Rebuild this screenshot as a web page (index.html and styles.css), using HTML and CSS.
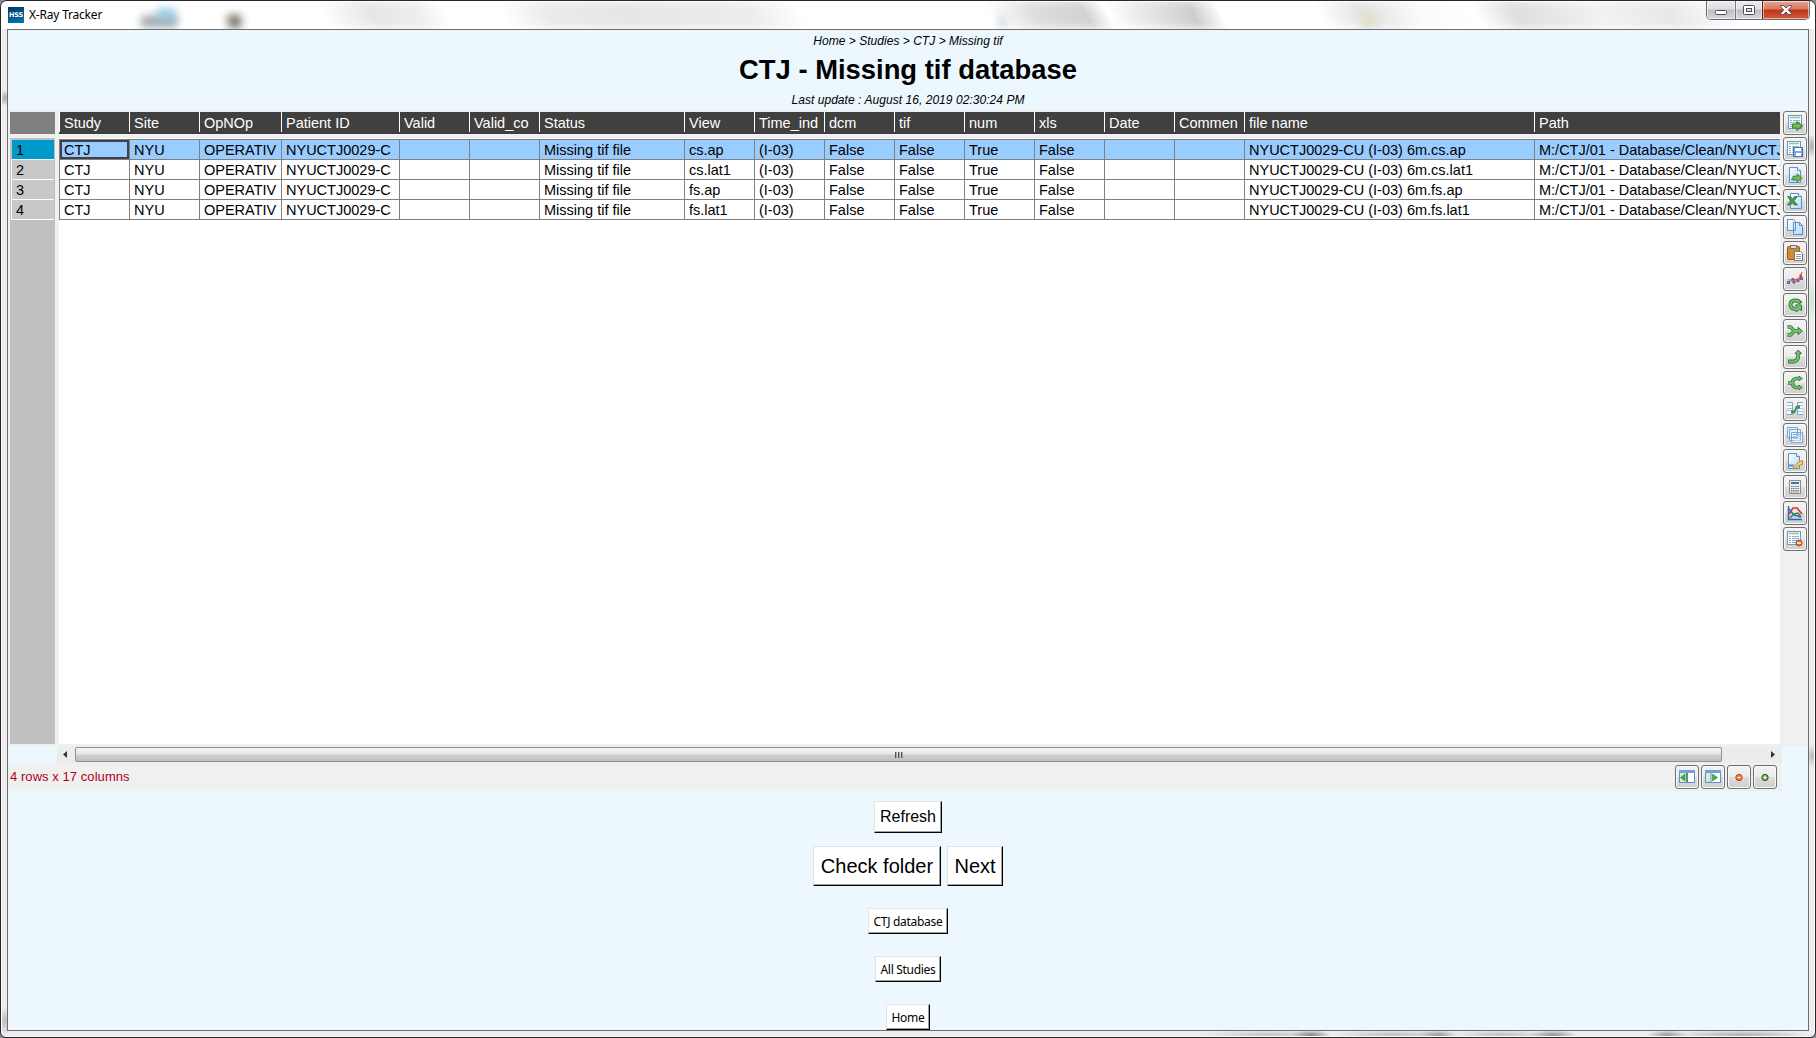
FILE: index.html
```html
<!DOCTYPE html>
<html lang="en">
<head>
<meta charset="utf-8">
<title>X-Ray Tracker</title>
<link rel="stylesheet" href="styles.css">
</head>
<body>
<svg class="sprite" aria-hidden="true">
  <defs>
    <linearGradient id="page" x2="1" y2="1"><stop stop-color="#fff"/><stop offset="1" stop-color="#b7d7f3"/></linearGradient>
    <symbol id="sheet" viewBox="0 0 16 16"><rect x=".5" y=".5" width="13" height="13" fill="#f5faff" stroke="#6b98cb"/><path d="M2 2.500h10" stroke="#96c982" stroke-width="1.500"/><path d="M2 5.500h10M2 7.500h10M2 9.500h10M2 11.500h10" stroke="#8fb4de"/><path d="M4.500 4v9" stroke="#fff"/></symbol>
    <symbol id="doc" viewBox="0 0 16 16"><path d="M2.500 .5h8l3 3v12h-11z" fill="url(#page)" stroke="#5b8fd0"/><path d="M10.500 .5v3h3" fill="#fff" stroke="#5b8fd0"/></symbol>
    <symbol id="arrow" viewBox="0 0 10 9"><path d="M.5 2.700h4V.6l5 3.900-5 3.900V6.300h-4z" fill="#79b957" stroke="#37872d"/></symbol>
  </defs>
</svg>
<div class="window">
  <header class="titlebar">
    <span class="app-icon">HSS</span>
    <span class="app-name">X-Ray Tracker</span>
    <i class="ghost g1"></i><i class="ghost g2"></i><i class="ghost g3"></i><i class="ghost g4"></i><i class="ghost g5"></i>
    <div class="controls">
      <span class="ctl min"><svg width="12" height="6"><rect x=".5" y=".5" width="11" height="4" rx="1" fill="#fff" stroke="#4c4c5c"/></svg></span>
      <span class="ctl max"><svg width="12" height="10"><rect x=".5" y=".5" width="11" height="9" rx="1" fill="#fff" stroke="#4c4c5c"/><rect x="3.500" y="3.500" width="5" height="3" fill="#ddd" stroke="#4c4c5c"/></svg></span>
      <span class="ctl close"><svg width="12" height="10"><path d="M.6.6h3.200L6 3 8.200.6h3.200v1.200L8.300 5l3.100 3.200v1.200H8.200L6 7 3.800 9.400H.6V8.200L3.700 5 .6 1.800z" fill="#fff" stroke="#574a55"/></svg></span>
    </div>
  </header>
  <main class="client">
    <section class="heading">
      <p class="crumbs">Home &gt; Studies &gt; CTJ &gt; Missing tif</p>
      <h1>CTJ - Missing tif database</h1>
      <p class="updated">Last update : August 16, 2019 02:30:24 PM</p>
    </section>
    <section class="sheet">
      <div class="rownums">
        <div class="corner"></div>
        <ol><li class="on">1</li><li>2</li><li>3</li><li>4</li></ol>
      </div>
      <div class="grid">
        <table>
          <colgroup><col class="w70"><col class="w70"><col class="w82"><col class="w118"><col class="w70"><col class="w70"><col class="w145"><col class="w70"><col class="w70"><col class="w70"><col class="w70"><col class="w70"><col class="w70"><col class="w70"><col class="w70"><col class="w290"><col class="w290"></colgroup>
          <thead><tr><th>Study</th><th>Site</th><th>OpNOp</th><th>Patient ID</th><th>Valid</th><th>Valid_co</th><th>Status</th><th>View</th><th>Time_ind</th><th>dcm</th><th>tif</th><th>num</th><th>xls</th><th>Date</th><th>Commen</th><th>file name</th><th>Path</th></tr></thead>
          <tbody>
            <tr class="gap"><td colspan="17"></td></tr>
            <tr class="on"><td class="cursor">CTJ</td><td>NYU</td><td>OPERATIV</td><td>NYUCTJ0029-C</td><td></td><td></td><td>Missing tif file</td><td>cs.ap</td><td>(I-03)</td><td>False</td><td>False</td><td>True</td><td>False</td><td></td><td></td><td>NYUCTJ0029-CU (I-03) 6m.cs.ap</td><td>M:/CTJ/01 - Database/Clean/NYUCTJ</td></tr>
            <tr><td>CTJ</td><td>NYU</td><td>OPERATIV</td><td>NYUCTJ0029-C</td><td></td><td></td><td>Missing tif file</td><td>cs.lat1</td><td>(I-03)</td><td>False</td><td>False</td><td>True</td><td>False</td><td></td><td></td><td>NYUCTJ0029-CU (I-03) 6m.cs.lat1</td><td>M:/CTJ/01 - Database/Clean/NYUCTJ</td></tr>
            <tr><td>CTJ</td><td>NYU</td><td>OPERATIV</td><td>NYUCTJ0029-C</td><td></td><td></td><td>Missing tif file</td><td>fs.ap</td><td>(I-03)</td><td>False</td><td>False</td><td>True</td><td>False</td><td></td><td></td><td>NYUCTJ0029-CU (I-03) 6m.fs.ap</td><td>M:/CTJ/01 - Database/Clean/NYUCTJ</td></tr>
            <tr><td>CTJ</td><td>NYU</td><td>OPERATIV</td><td>NYUCTJ0029-C</td><td></td><td></td><td>Missing tif file</td><td>fs.lat1</td><td>(I-03)</td><td>False</td><td>False</td><td>True</td><td>False</td><td></td><td></td><td>NYUCTJ0029-CU (I-03) 6m.fs.lat1</td><td>M:/CTJ/01 - Database/Clean/NYUCTJ</td></tr>
          </tbody>
        </table>
      </div>
      <nav class="tools">
        <span class="tool"><svg viewBox="0 0 16 16"><use href="#sheet" x="1" y="0" width="16" height="16"/><use href="#arrow" x="5" y="6" width="11" height="10"/></svg></span>
        <span class="tool"><svg viewBox="0 0 16 16"><use href="#sheet" width="16" height="16"/><rect x="6.500" y="6.500" width="9" height="9" fill="#7da7e0" stroke="#4473b8"/><path d="M8 7h6v3H8zM9 12h5v3H9z" fill="#fff"/></svg></span>
        <span class="tool"><svg viewBox="0 0 16 16"><use href="#doc" width="16" height="16"/><path d="M4 12.500h4" stroke="#5b8fd0" stroke-width="2"/><use href="#arrow" x="5" y="6.500" width="11" height="9"/></svg></span>
        <span class="tool"><svg viewBox="0 0 16 16"><use href="#doc" x="1" width="16" height="16"/><path d="M.5 3.500h3L5.500 6l2-2.500h3L7 7.700l3.500 4.300H7L5.300 9.700 3.600 12H.3l3.300-4.300z" fill="#4c9b50" stroke="#23713c" stroke-width=".7"/></svg></span>
        <span class="tool"><svg viewBox="0 0 16 16"><path d="M.5.5h6l2 2v9h-8zM6.500 3.500h6l3 3v9h-9z" fill="url(#page)" stroke="#5b8fd0"/><path d="M12.500 3.500v3h3" fill="none" stroke="#5b8fd0"/></svg></span>
        <span class="tool"><svg viewBox="0 0 16 16"><rect x=".5" y="1.500" width="12" height="13" rx="1" fill="#d48a31" stroke="#9a5a17"/><rect x="3.500" y=".5" width="6" height="3" fill="#ddd" stroke="#777"/><path d="M7.500 6.500h6l2 2v7h-8z" fill="#fff" stroke="#777"/><path d="M9 9.500h5M9 11.500h5M9 13.500h5" stroke="#999"/></svg></span>
        <span class="tool"><svg viewBox="0 0 16 16" fill="none"><path d="M1.500 11.500L5.500 8l6 1.500L15 1" stroke="#e63b35"/><path d="M1.500 8.500L6.500 10.500l4-3.500 4 1" stroke="#5f8fd2"/><g fill="#e63b35"><path d="M4.500 7h2.500v2.500H4.500zM9.500 8h3v3h-3zM12.500 3.500h2.500v2.500h-2.500z"/></g><g fill="#8fb8e8" stroke="#2e62ad"><path d="M.5 10.500h2v2h-2zM6 10h2v2H6zM13.500 6.500h2v2h-2z"/></g></svg></span>
        <span class="tool"><svg viewBox="0 0 16 16" fill="none"><path d="M13.500 6.500C12 2.500 3.500 2 3.500 7.500c0 3.500 2.500 4.500 5 4.500" stroke="#2f7d3b" stroke-width="4"/><path d="M8.500 7.800l6 .2v5.500l-2-1.200-3 2.700-2.500-3 3-2.200z" fill="#79c071" stroke="#2f7d3b"/><path d="M12.800 5.800C11 2.500 3.500 2.500 3.500 7.500c0 3.200 2.500 4.500 5.500 4.500" stroke="#79c071" stroke-width="2"/></svg></span>
        <span class="tool"><svg viewBox="0 0 16 16" fill="none"><path d="M.5 4h3l4 4-4 4h-3M7 8h5" stroke="#2f7d3b" stroke-width="3.600" stroke-linejoin="round"/><path d="M11 4.200L15.300 8 11 11.800z" fill="#79c071" stroke="#2f7d3b"/><path d="M1.200 4h2.300l4 4-4 4H1.200M7 8h5" stroke="#79c071" stroke-width="1.800"/></svg></span>
        <span class="tool"><svg viewBox="0 0 16 16" fill="none"><path d="M1 12.500h5.500q4.500-.5 4.700-5.500V4" stroke="#2f7d3b" stroke-width="4"/><path d="M8 4.500L11.200 1l3.300 3.500z" fill="#79c071" stroke="#2f7d3b"/><path d="M1.700 12.500h5q4.300-.5 4.500-5.500V3.500" stroke="#79c071" stroke-width="2.200"/></svg></span>
        <span class="tool"><svg viewBox="0 0 16 16" fill="none"><path d="M1 8h5M13 3.500H9Q5.500 4 5.500 8t3.500 4.500h4" stroke="#2f7d3b" stroke-width="3.600"/><path d="M12 1.200l3.300 2.300L12 5.800zM12 10.200l3.300 2.300-3.300 2.300z" fill="#79c071" stroke="#2f7d3b"/><path d="M1.500 8h4M13 3.500H9Q5.500 4 5.500 8t3.500 4.500h4" stroke="#79c071" stroke-width="1.800"/></svg></span>
        <span class="tool"><svg viewBox="0 0 16 16" fill="none"><path d="M0 1.500h5.500v12H0M16 1.500h-5.500v12H16" fill="#f5faff" stroke="#7ba5d3"/><path d="M0 4.500h5M0 7.500h5M0 9.500h5M11 4.500h5M11 7.500h5M11 10.500h5" stroke="#9fc0e4"/><path d="M5 11h2.500l2-5H12" stroke="#3f8f45" stroke-width="1.800"/><path d="M4 9.500h3v3H4zM10 4.500h3v3h-3z" fill="#3f8f45"/></svg></span>
        <span class="tool"><svg viewBox="0 0 16 16"><path d="M.5.500h10v10H.5zM2.500 2.500h11v11h-11zM4.500 5.500h11v10h-11z" fill="#e8f2fc" stroke="#7ba5d3"/><path d="M6 7.500h8" stroke="#78add9"/><path d="M6 9.500h8M6 11.500h8M6 13.500h8" stroke="#b6cee9"/></svg></span>
        <span class="tool"><svg viewBox="0 0 16 16"><use href="#doc" x="-1" width="16" height="16"/><path d="M2 12.500h5" stroke="#5b8fd0" stroke-width="2"/><path d="M6 15l5.500-6 4-1.500v4l-4 1-3 3z" fill="#ffd26a" stroke="#bf8a2c"/></svg></span>
        <span class="tool"><svg viewBox="0 0 16 16"><rect x="2.500" y="1.500" width="11" height="13" fill="#eee" stroke="#8b8b8b"/><path d="M4 3h8v2H4z" fill="#4773b5"/><path d="M4 7.500h8M4 9.500h8M4 11.500h8M4 13h8" stroke="#777" stroke-dasharray="1.500 .6"/></svg></span>
        <span class="tool"><svg viewBox="0 0 16 16" fill="none"><path d="M1.500 1v13.500H15" stroke="#2d65c0" stroke-width="1.500"/><path d="M2 9l4-6h4l5 6" stroke="#e42f2c" stroke-width="1.700"/><path d="M2 4l5 6 7 2" stroke="#2c6fd0" stroke-width="1.500"/><path d="M3 13l4-4 4-1 3 4" stroke="#2e8a37" stroke-width="1.500"/></svg></span>
        <span class="tool"><svg viewBox="0 0 16 16"><use href="#sheet" width="16" height="16"/><circle cx="12" cy="12" r="3" fill="#ee6e2d" stroke="#b84415"/><path d="M10 12h4" stroke="#fff" stroke-width="1.500"/></svg></span>
      </nav>
    </section>
    <div class="scroll">
      <span class="arr"><svg width="4" height="7"><path d="M4 0v7L0 3.500z" fill="#333"/></svg></span>
      <span class="thumb"><i></i><i></i><i></i></span>
      <span class="arr right"><svg width="4" height="7"><path d="M0 0v7l4-3.500z" fill="#333"/></svg></span>
    </div>
    <div class="status">
      <span class="count">4 rows x 17 columns</span>
      <span class="tool"><svg viewBox="0 0 16 16"><path d="M.5 1.500h15v12H.5z" fill="#fff" stroke="#5b8fd0"/><path d="M0 1h16v3H0z" fill="#6f9fdc"/><path d="M7 4h2v9H7z" fill="#5b8f75"/><path d="M1 4h6v9H1z" fill="#d6efcf"/><path d="M6 5v7L1.500 8.500z" fill="#4fa350" stroke="#36863c" stroke-width=".6"/></svg></span>
      <span class="tool"><svg viewBox="0 0 16 16"><path d="M.5 1.500h15v12H.5z" fill="#fff" stroke="#5b8fd0"/><path d="M0 1h16v3H0z" fill="#6f9fdc"/><path d="M1 4h5v9H1z" fill="#d1f0cb"/><path d="M6 4v9" stroke="#5b8fd0"/><path d="M7.500 5v7L12.500 8.500z" fill="#4fa350" stroke="#36863c" stroke-width=".6"/></svg></span>
      <span class="tool"><svg viewBox="0 0 16 16"><circle cx="8" cy="8.500" r="3.200" fill="#f17930" stroke="#c34a14"/><path d="M6.300 8.500h3.400" stroke="#fff" stroke-width="1.200"/></svg></span>
      <span class="tool"><svg viewBox="0 0 16 16"><circle cx="8" cy="8.500" r="3.200" fill="#6aa14b" stroke="#35661f"/><path d="M6.300 8.500h3.400M8 6.800v3.400" stroke="#fff" stroke-width="1.200"/></svg></span>
    </div>
    <section class="actions">
      <div class="line l1"><button class="b refresh">Refresh</button></div>
      <div class="line l2"><button class="b check">Check folder</button><button class="b next">Next</button></div>
      <div class="line l3"><button class="b small ctj">CTJ database</button></div>
      <div class="line l4"><button class="b small all">All Studies</button></div>
      <div class="line l4"><button class="b small home">Home</button></div>
    </section>
  </main>
</div>
</body>
</html>
```
FILE: styles.css
```css
* { box-sizing: border-box; }
body { margin: 0; background: #858b90; font-family: "Liberation Sans", Arial, sans-serif; color: #000; }
p, h1, ol { margin: 0; padding: 0; }
.sprite { position: absolute; width: 0; height: 0; }

/* window frame */
.window { position: relative; width: 1816px; height: 1038px; display: flex; flex-direction: column; padding: 0 6px 6px; overflow: hidden;
  border: 1px solid #27262b; border-radius: 7px 7px 6px 6px; box-shadow: inset 0 0 0 1px #fbfbfb;
  background:
    radial-gradient(ellipse 20px 5px at 1310px 1034px, #888, transparent),
    radial-gradient(ellipse 70px 5px at 1265px 1034px, #c4c4c4, transparent),
    radial-gradient(ellipse 20px 5px at 1437px 1034px, #999, transparent),
    radial-gradient(ellipse 60px 5px at 1390px 1034px, #c0c0c0, transparent),
    radial-gradient(ellipse 24px 5px at 1552px 1034px, #929292, transparent),
    radial-gradient(ellipse 50px 5px at 1500px 1034px, #c0c0c0, transparent),
    radial-gradient(ellipse 20px 5px at 1666px 1034px, #999, transparent),
    radial-gradient(ellipse 70px 5px at 1740px 1034px, #b0b0b0, transparent),
    radial-gradient(ellipse 6px 8px at 4px 97px, #aaa, transparent),
    radial-gradient(ellipse 6px 14px at 4px 1020px, #bbb, transparent),
    radial-gradient(ellipse 6px 12px at 1811px 145px, #aaa, transparent),
    radial-gradient(ellipse 6px 22px at 1811px 300px, #cfe6cf, transparent),
    radial-gradient(ellipse 6px 12px at 1811px 755px, #bbb, transparent),
    #efeded; }
.titlebar { flex: 0 0 28px; margin: 0 -6px; display: flex; padding-left: 7px; position: relative; overflow: hidden; border-radius: 6px 6px 0 0;
  box-shadow: inset 0 1px 0 #fff;
  background: linear-gradient(180deg, rgba(255,255,255,.35), transparent 30%, transparent 75%, rgba(255,255,255,.5)),
    linear-gradient(62deg, #fff 0 290px, #e6e6e6 335px, #eee 375px, #fff 400px, #fff 450px, #ebebeb 490px, #e6e6e6 560px, #ededed 670px, #fff 715px, #fff 880px, #dedede 920px, #d2d2d2 965px, #fff 985px, #ececec 1010px, #cdcdcd 1060px, #fff 1085px, #fff 1170px, #e2e2e2 1210px, #fbfbfb 1260px, #fff 1310px, #dedede 1345px, #f2f2f2 1420px, #e8e8e8 1480px, #fff 1540px); }
.app-icon { width: 16px; height: 16px; margin-top: 6px; background: linear-gradient(160deg, #003a5d, #0078bb); color: #fff; font: bold 6.5px/16px "DejaVu Sans", sans-serif; text-align: center; letter-spacing: -.1px; }
.app-name { margin: 5px 0 0 5px; font: 12px/18px "Noto Sans", sans-serif; letter-spacing: -.2px; }
.ghost { position: absolute; filter: blur(4px); opacity: .85; }
.g1 { left: 140px; top: 15px; width: 36px; height: 11px; background: #8d9397; }
.g2 { left: 156px; top: 7px; width: 18px; height: 14px; background: #8fc6e3; }
.g3 { left: 228px; top: 14px; width: 12px; height: 13px; background: #55534a; box-shadow: -6px -2px 0 -2px #ddc98c; }
.g4 { left: 997px; top: 16px; width: 8px; height: 10px; background: #bcd3e2; }
.g5 { left: 1361px; top: 13px; width: 14px; height: 13px; background: #e3dfc0; }
.controls { position: absolute; right: 5px; top: 0; display: flex; height: 19px; border: 1px solid #6c6b72; border-top: 0; border-radius: 0 0 5px 5px; overflow: hidden; }
.ctl { display: flex; align-items: center; justify-content: center; width: 28px; background: linear-gradient(#ececec, #dedee0 45%, #bcbcc2 50%, #d9d9de); box-shadow: inset 0 0 0 1px rgba(255,255,255,.55); }
.max { width: 27px; border-left: 1px solid #77767c; }
.min svg { margin-top: 6px; }
.close { width: 47px; border-left: 1px solid #5e1d16; background: linear-gradient(#e9a694, #d9765f 45%, #bd3519 50%, #d7593b); }
.client { flex: 1 1 0; min-height: 0; display: flex; flex-direction: column; overflow: hidden; border: 1px solid #6c6c6e; background: #ecf8fe; }

.heading { height: 80px; flex: none; text-align: center; }
.crumbs { height: 22px; padding-top: 2px; font: italic 12px/18px "Liberation Sans", sans-serif; letter-spacing: .03px; }
h1 { font-size: 27.4px; line-height: 36px; }
.updated { font: italic 12px/18px "Liberation Sans", sans-serif; padding-top: 3px; letter-spacing: .05px; }

/* data sheet */
.sheet { flex: 0 0 636px; display: flex; background: #f0f0f0; padding: 2px 1px 2px 2px; }
.rownums { width: 45px; display: flex; flex-direction: column; gap: 4px; font-size: 14.5px; }
.corner { height: 22px; background: #808080; }
.rownums ol { flex: 1; list-style: none; background: #c0c0c0; padding: 1px 1px 0; }
.rownums li { height: 20px; line-height: 20px; padding-left: 4px; background: #c8c8c8; border: solid #fff; border-width: 0 0 1px 1px; }
.rownums li:first-child { height: 21px; border-top: 1px solid #c0c0c0; border-left-color: #c0c0c0; }
.rownums li.on { background: #0099cc; }
.grid { width: 1721px; margin: 0 3px 0 4px; background: #fff; overflow: hidden; }
table { width: 1765px; table-layout: fixed; border-spacing: 0; font-size: 14.5px; }
.w70 { width: 70px; } .w82 { width: 82px; } .w118 { width: 118px; } .w145 { width: 145px; } .w290 { width: 290px; }
th, td { padding: 0 0 0 5px; text-align: left; font-weight: normal; white-space: nowrap; overflow: hidden; }
th { height: 22px; line-height: 22px; color: #fff; background: linear-gradient(#fff, #fff) 0 0 / 1px 20px no-repeat #404040; }
td { height: 20px; padding: 1px 0 0 4px; line-height: 18px; border-left: 1px solid #808080; border-bottom: 1px solid #808080; }
.gap td { height: 6px; line-height: 0; padding: 0; border-left: 0; background: linear-gradient(#f0f0f0 4px, #fff 4px); }
tr.on td { background: #99ccff; }
td.cursor { box-shadow: inset 0 0 0 2px #404048; }

.tools { display: flex; flex-direction: column; gap: 2px; margin-top: -1px; }
.tool { flex: none; width: 24px; height: 24px; padding: 3px; border: 1px solid #707070; border-radius: 3px; background: linear-gradient(#f3f3f3, #ebebeb 48%, #dcdcdc 52%, #cfcfcf); box-shadow: inset 0 0 0 1px #f8f8f8; }
.tool svg { display: block; width: 16px; height: 16px; }

.scroll { flex: 0 0 17px; margin: 0 26px 0 49px; display: flex; align-items: center; background: #ececec; }
.arr { width: 18px; display: flex; justify-content: center; padding: 0 2px 1px 0; }
.arr.right { margin-left: auto; padding-right: 0; }
.thumb { width: 1647px; height: 15px; display: flex; align-items: center; justify-content: center; gap: 1px; border: 1px solid #929297; border-radius: 2px; background: linear-gradient(#f5f5f5, #e6e6e7 48%, #cecfd1 52%, #bfc0c4); }
.thumb i { width: 2px; height: 6px; background: linear-gradient(90deg, #555 1px, #aaa 1px); }
.status { flex: 0 0 28px; margin-right: 26px; padding: 2px 5px 2px 2px; display: flex; gap: 2px; background: #f0f0f0; }
.count { flex: 1; color: #b0001c; font-size: 13px; line-height: 24px; letter-spacing: .06px; }

/* action buttons */
.actions { flex: none; display: flex; flex-direction: column; padding-top: 10px; }
.line { display: flex; justify-content: center; gap: 6px; }
.l2 { margin-top: 13px; } .l3 { margin-top: 22px; } .l4 { margin-top: 22px; }
.b { padding: 0; background: #fff; border: solid; border-width: 1px; border-color: #e3e3e3 #000 #000 #e3e3e3; box-shadow: inset -1px -1px 0 #a0a0a0; font-family: "Liberation Sans", Arial, sans-serif; color: #000; white-space: nowrap; }
.refresh { width: 68px; height: 32px; font-size: 16px; }
.check { width: 128px; height: 40px; font-size: 20px; }
.next { width: 56px; height: 40px; font-size: 20px; }
.small { height: 26px; font: 12px "Noto Sans", sans-serif; letter-spacing: -.3px; }
.ctj { width: 80px; } .all { width: 66px; } .home { width: 44px; }
```
